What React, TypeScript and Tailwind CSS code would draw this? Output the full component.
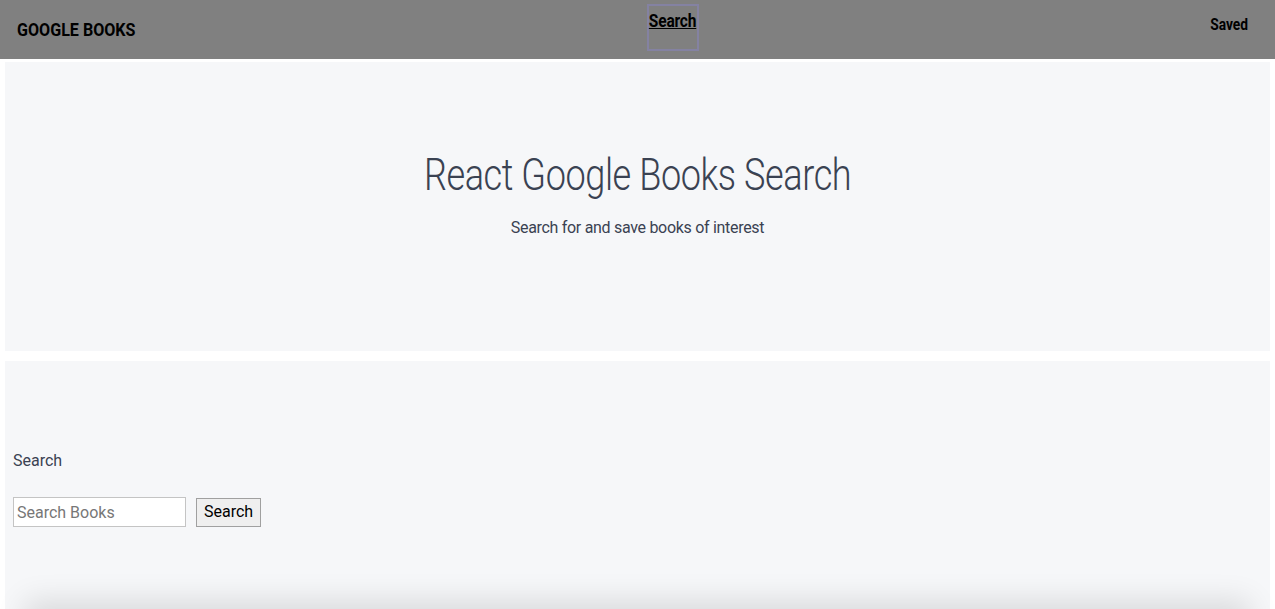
import React, { useState } from 'react';

const App = () => {
  const [query, setQuery] = useState('');

  return (
    <div className="min-h-screen bg-white font-['Roboto','Liberation_Sans',sans-serif]">
      <nav className="h-[59px] w-full bg-[#808080] flex items-start pl-[17px] pr-[27px] text-black">
        <div className="w-[630px] pt-[19px]">
          <a className="inline-block origin-left scale-x-[0.87] text-[18.5px] font-bold leading-[22px]">GOOGLE BOOKS</a>
        </div>
        <a className="mt-[4px] w-[52px] h-[47px] border-2 border-[#8482a2] flex justify-center">
          <span className="inline-block scale-x-[0.86] text-[18px] font-bold underline leading-[30px] tracking-[-0.2px]">Search</span>
        </a>
        <a className="ml-auto mt-[15px] inline-block origin-right scale-x-[0.86] text-[16px] font-bold leading-[20px]">Saved</a>
      </nav>
      <div className="px-[5px] pt-[3px]">
        <header className="h-[289px] bg-[#f6f7f9] flex flex-col items-center pt-[87px] text-[#3a4252]">
          <h1 className="inline-block scale-x-[0.82] text-[44px] font-light leading-[52px] tracking-[-0.5px]">
            React Google Books Search
          </h1>
          <p className="mt-[17px] text-[16px] leading-[20px] tracking-[-0.3px]">Search for and save books of interest</p>
        </header>

        <section className="mt-[10px] h-[262px] bg-[#f6f7f9] px-[8px] pt-[90px] text-[#3a4252]">
          <label className="block text-[16px] leading-[20px]">Search</label>
          <form className="mt-[26px] flex items-center gap-[10px]" onSubmit={(e) => e.preventDefault()}>
            <input
              value={query}
              onChange={(e) => setQuery(e.target.value)}
              placeholder="Search Books"
              className="w-[173px] h-[30px] bg-white border border-[#c4c4c4] px-[3px] text-[16px] text-black placeholder:text-[#777]"
            />
            <button className="h-[29px] px-[7px] bg-[#efefef] border border-[#a0a0a0] text-[16px] text-black">Search</button>
          </form>
        </section>
        <div className="h-[40px] -mt-[10px] mx-[20px] shadow-[0_-12px_30px_rgba(0,0,0,0.12)] bg-white" />
      </div>
    </div>
  );
};

export default App;
